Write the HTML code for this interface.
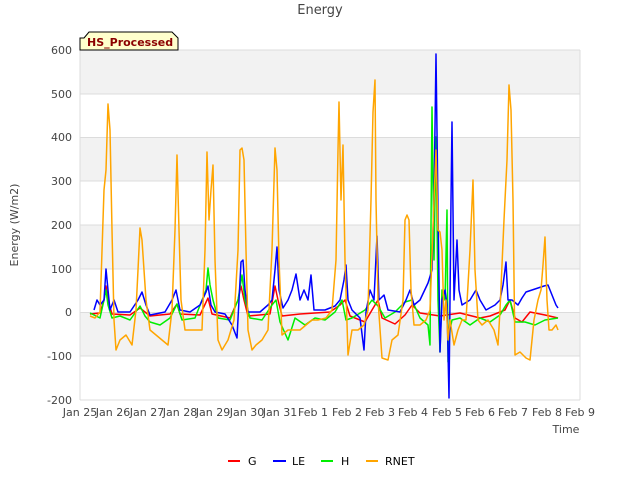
<!DOCTYPE html>
<html><head><style>body{margin:0;background:#fff}svg{display:block;font-family:"DejaVu Sans","Liberation Sans",sans-serif}</style></head><body>
<svg width="640" height="480" xmlns="http://www.w3.org/2000/svg">
<rect width="640" height="480" fill="#fff"/>
<rect x="80" y="50" width="500" height="350" fill="#fff"/>
<rect x="80" y="50" width="500" height="44" fill="#f2f2f2"/>
<rect x="80" y="137.5" width="500" height="44" fill="#f2f2f2"/>
<rect x="80" y="225" width="500" height="44" fill="#f2f2f2"/>
<rect x="80" y="312.5" width="500" height="44" fill="#f2f2f2"/>
<g stroke="#dcdcdc" stroke-width="1">
<line x1="80" x2="580" y1="50" y2="50"/><line x1="80" x2="580" y1="94" y2="94"/><line x1="80" x2="580" y1="137.5" y2="137.5"/><line x1="80" x2="580" y1="181" y2="181"/><line x1="80" x2="580" y1="225" y2="225"/><line x1="80" x2="580" y1="269" y2="269"/><line x1="80" x2="580" y1="312.5" y2="312.5"/><line x1="80" x2="580" y1="356" y2="356"/><line x1="80" x2="580" y1="400" y2="400"/>
<line x1="80" x2="80" y1="50" y2="400"/><line x1="580" x2="580" y1="50" y2="400"/>
</g>
<g font-size="11" fill="#444" text-anchor="end">
<text x="72" y="54">600</text><text x="72" y="98">500</text><text x="72" y="141">400</text><text x="72" y="185">300</text><text x="72" y="229">200</text><text x="72" y="273">100</text><text x="72" y="316">0</text><text x="72" y="360">-100</text><text x="72" y="404">-200</text>
</g>
<g font-size="11" fill="#444" text-anchor="middle">
<text x="80" y="416">Jan 25</text><text x="113" y="416">Jan 26</text><text x="147" y="416">Jan 27</text><text x="180" y="416">Jan 28</text><text x="213" y="416">Jan 29</text><text x="247" y="416">Jan 30</text><text x="280" y="416">Jan 31</text><text x="313" y="416">Feb 1</text><text x="347" y="416">Feb 2</text><text x="380" y="416">Feb 3</text><text x="413" y="416">Feb 4</text><text x="447" y="416">Feb 5</text><text x="480" y="416">Feb 6</text><text x="513" y="416">Feb 7</text><text x="547" y="416">Feb 8</text><text x="580" y="416">Feb 9</text>
</g>
<text x="566" y="433" font-size="11" fill="#444" text-anchor="middle">Time</text>
<text x="320" y="14" font-size="13" fill="#444" text-anchor="middle">Energy</text>
<text transform="translate(18,225) rotate(-90)" font-size="11" fill="#444" text-anchor="middle">Energy (W/m2)</text>
<g fill="none" stroke-width="1.5" stroke-linejoin="round">
<polyline stroke="#ff0000" points="90,314 100,313 104,300 106,286 108,300 112,314 130,315 140,308 150,316 170,314 177,304 180,314 200,315 208,298 212,314 230,318 238,300 241,286 244,300 248,316 270,314 275,286 278,300 282,316 300,314 330,312 340,305 345,300 350,316 365,322 372,310 378,300 382,318 395,324 405,315 412,305 420,313 440,316 460,313 480,318 490,316 505,310 510,300 515,318 522,322 530,312 545,315 558,318"/>
<polyline stroke="#00ee00" points="90,313 100,318 104,300 106,290 108,305 112,318 120,316 130,320 140,306 145,316 150,322 160,325 170,318 177,304 182,320 195,318 206,290 208,268 210,285 213,300 218,318 230,320 238,300 242,275 245,300 250,318 262,320 272,305 276,300 280,322 288,340 295,318 305,325 315,318 325,320 335,312 342,300 346,320 352,318 365,310 372,300 378,306 385,318 395,312 405,302 412,300 420,318 428,325 430,345 432,107 434,260 436,137 438,300 440,352 442,290 445,300 447,210 448,362 450,330 452,320 460,318 470,325 480,318 490,322 500,315 506,305 510,300 515,322 525,322 535,325 545,320 558,318"/>
<polyline stroke="#0000ff" points="94,310 97,300 100,305 104,300 106,269 108,290 110,310 114,300 118,312 130,312 138,300 142,292 146,305 150,315 165,312 172,300 176,290 180,310 190,312 200,305 206,292 208,286 211,305 215,312 225,314 232,325 237,338 239,300 241,262 243,260 245,290 248,312 260,312 268,305 272,300 275,270 277,247 279,290 283,308 288,300 292,290 296,274 300,300 304,290 308,300 311,275 314,310 325,310 335,306 340,300 344,280 346,265 348,300 352,310 360,318 364,350 366,312 370,290 374,300 377,236 379,300 384,295 388,310 400,312 406,300 410,290 414,305 420,300 428,283 432,270 434,200 436,54 438,210 440,352 442,300 445,290 447,305 449,398 451,200 452,122 454,300 457,240 459,290 462,305 470,300 476,290 480,300 486,310 495,305 500,300 503,285 506,262 508,300 512,300 518,305 522,298 526,292 532,290 538,288 544,286 548,285 550,290 552,295 554,300 556,305 558,308"/>
<polyline stroke="#ffa500" points="90,316 95,318 100,312 104,190 106,170 108,104 110,130 112,230 114,320 116,350 120,340 126,335 132,345 136,310 138,270 140,228 142,240 144,270 146,300 150,330 156,335 162,340 168,345 172,310 175,230 177,155 179,230 181,300 185,330 190,330 196,330 202,330 205,250 207,152 209,220 211,190 213,165 215,260 218,340 222,350 228,340 234,320 238,250 240,150 242,148 244,160 246,250 248,330 252,350 256,345 262,340 268,330 272,250 275,148 277,170 279,260 282,335 288,330 294,330 300,330 306,325 312,320 318,320 326,318 332,310 336,260 338,150 339,102 341,200 343,145 345,260 348,355 352,330 358,330 364,325 368,310 371,200 373,112 375,80 376,200 378,300 382,358 388,360 392,340 398,335 403,300 405,220 407,215 409,220 411,290 414,325 420,325 426,320 430,310 434,200 436,150 438,230 440,232 442,250 444,320 446,300 448,340 450,320 454,345 458,330 462,320 466,320 470,250 473,180 475,270 478,320 482,325 488,320 494,330 498,345 500,310 504,220 507,160 509,85 511,110 513,200 515,355 520,352 526,358 530,360 534,320 538,300 541,290 543,265 545,237 547,300 549,330 552,330 556,325 558,330"/>
</g>
<path d="M84,38 L89,32 L172,32 L178,38 L178,50 L80,50 L80,38 Z" fill="#ffffcc" stroke="#000" stroke-width="1"/>
<text x="87" y="46" font-size="11" font-weight="bold" fill="#8b0000">HS_Processed</text>
<g stroke-width="2">
<line x1="228" x2="240" y1="461" y2="461" stroke="#ff0000"/><line x1="273" x2="286" y1="461" y2="461" stroke="#0000ff"/><line x1="321" x2="333" y1="461" y2="461" stroke="#00ee00"/><line x1="366" x2="378" y1="461" y2="461" stroke="#ffa500"/>
</g>
<g font-size="11" fill="#000"><text x="248" y="465">G</text><text x="292" y="465">LE</text><text x="341" y="465">H</text><text x="385" y="465">RNET</text></g>
</svg>
</body></html>
